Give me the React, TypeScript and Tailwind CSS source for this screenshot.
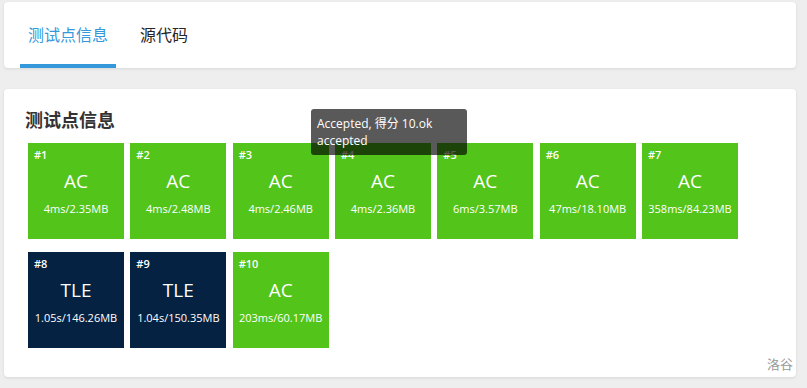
import React from "react";

type Case = { id: number; status: "AC" | "TLE"; detail: string };

const CASES: Case[] = [
  { id: 1, status: "AC", detail: "4ms/2.35MB" },
  { id: 2, status: "AC", detail: "4ms/2.48MB" },
  { id: 3, status: "AC", detail: "4ms/2.46MB" },
  { id: 4, status: "AC", detail: "4ms/2.36MB" },
  { id: 5, status: "AC", detail: "6ms/3.57MB" },
  { id: 6, status: "AC", detail: "47ms/18.10MB" },
  { id: 7, status: "AC", detail: "358ms/84.23MB" },
  { id: 8, status: "TLE", detail: "1.05s/146.26MB" },
  { id: 9, status: "TLE", detail: "1.04s/150.35MB" },
  { id: 10, status: "AC", detail: "203ms/60.17MB" },
];

function CaseTile({ c }: { c: Case }) {
  const bg = c.status === "AC" ? "bg-[#52c41a]" : "bg-[#052242]";
  return (
    <div className={`${bg} relative flex h-[96px] w-[96px] flex-col items-center text-white`}>
      <span className="absolute left-[6px] top-[5px] text-[11px] font-semibold leading-[14px]">
        #{c.id}
      </span>
      <span className="mt-[25px] text-[19px] leading-[26px]">{c.status}</span>
      <span className="mt-[8px] text-[11px] leading-[14px]">{c.detail}</span>
    </div>
  );
}

export default function App() {
  return (
    <div
      className="h-[388px] w-[807px] bg-[#eeeeee] pl-[4px] pt-[2px] text-[#333]"
      style={{ fontFamily: '"Open Sans", "Noto Sans CJK SC", sans-serif' }}
    >
      <div className="flex h-[66px] w-[792px] gap-[16px] rounded-[4px] bg-white px-[16px] shadow-[0_1px_3px_rgba(0,0,0,0.1)]">
        <div className="flex flex-col">
          <span className="flex flex-1 items-center px-[8px] pt-[4px] text-[16px] text-[#3498db]">
            测试点信息
          </span>
          <div className="h-[4px] bg-[#3498db]" />
        </div>
        <div className="flex flex-col">
          <span className="flex flex-1 items-center px-[8px] pt-[4px] text-[16px] text-[#262626]">
            源代码
          </span>
          <div className="h-[4px]" />
        </div>
      </div>

      <div className="relative mt-[21px] h-[288px] w-[792px] rounded-[4px] bg-white px-[21px] pt-[18px] shadow-[0_1px_3px_rgba(0,0,0,0.1)]">
        <h2 className="text-[18px] font-bold leading-[26px] text-[#333]">测试点信息</h2>
        <div className="mt-[10px] flex flex-wrap gap-x-[6.33px] gap-y-[13px] pl-[3px]">
          {CASES.map((c) => (
            <CaseTile key={c.id} c={c} />
          ))}
        </div>

        <div className="absolute left-[307px] top-[20px] w-[156px] rounded-[3px] bg-black/65 px-[6px] py-[6px] text-[12px] leading-[17px] text-white">
          Accepted, 得分 10.ok
          <br />
          accepted
        </div>

        <span className="absolute bottom-[3px] right-[3px] text-[13px] text-[#999]">洛谷</span>
      </div>
    </div>
  );
}
